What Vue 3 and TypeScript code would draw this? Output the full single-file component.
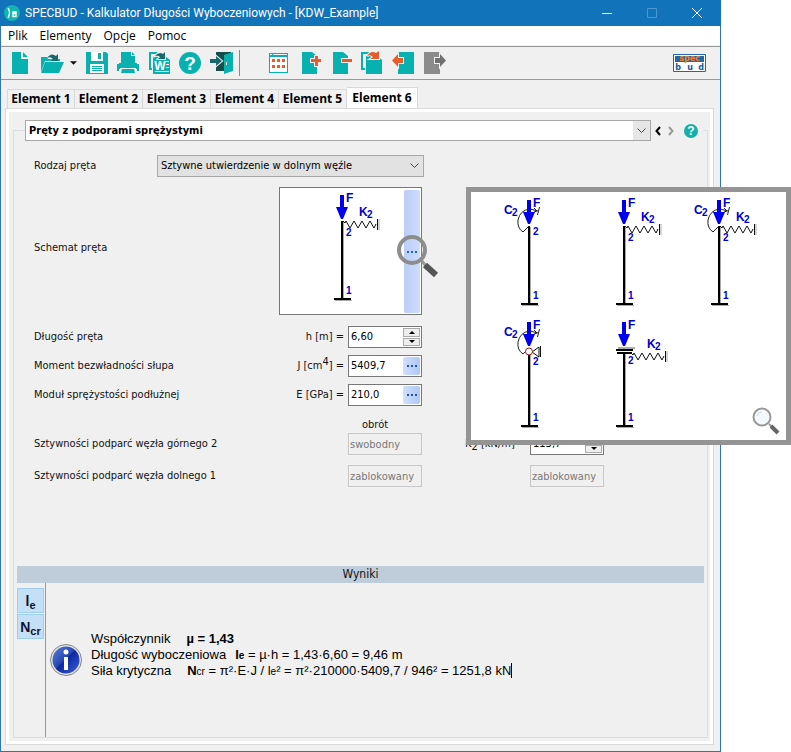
<script setup lang="ts">
import { ref } from 'vue'

interface Part { d: string; fill: string; stroke?: string }
interface Glyph { t: string; x: number; y: number; size: number; fill: string }
interface Tool { name: string; parts: Part[]; glyph?: Glyph }
interface Scheme { name: string; rotation: boolean; spring: boolean; top: 'free' | 'pinned' | 'guided'; nodeY: number }

const teal = '#06b1b0'
const dark = '#17696d'
const red = '#e85c2b'

const fileTools: Tool[] = [
  { name: 'Zapisz', parts: [
    { d: 'M1 1h20l2 2v20H1z', fill: teal },
    { d: 'M6 1h12v9H6zM5 13h14v9H5z', fill: '#fff' },
    { d: 'M13 2h3v6h-3zM7 15h10v1H7zM7 17h10v1H7zM7 19h10v1H7z', fill: teal },
  ] },
  { name: 'Drukuj', parts: [
    { d: 'M5 1h10v4h4v7H5zM16 1l3 3h-3z', fill: teal },
    { d: 'M1 13h2v-1h18v1h2v7h-2v-2H3v2H1z', fill: teal },
    { d: 'M4 17h16v1l1 5H3l1-5z', fill: '#f0f0f0' },
    { d: 'M6 18h12l1 4H5z', fill: teal },
  ] },
  { name: 'Eksport do Worda', parts: [
    { d: 'M2 1h8v3H5v15H2z', fill: teal },
    { d: 'M4 3h6v1H5v13H4z', fill: '#fff' },
    { d: 'M6 5h12l5 4v14H6z', fill: teal },
    { d: 'M18 10h4v1h-4zM19 13h3v1h-3zM19 16h3v1h-3zM8 20h14v1H8z', fill: '#fff' },
    { d: 'M8 5Q12 0 16 3l2-2v7h-7l2-2Q11 4 8 5z', fill: dark, stroke: '#f0f0f0' },
  ], glyph: { t: 'W', x: 13, y: 19, size: 12, fill: '#fff' } },
  { name: 'Pomoc', parts: [
    { d: 'M12 1a11 11 0 1 1 0 22a11 11 0 1 1 0-22z', fill: teal },
  ], glyph: { t: '?', x: 12, y: 19, size: 19, fill: '#fff' } },
  { name: 'Wyjście', parts: [
    { d: 'M7 1h15v19H7z', fill: '#174e4c' },
    { d: 'M15 4l9-3v19l-9 3z', fill: teal },
    { d: 'M17 11h1v3h-1z', fill: '#fff' },
    { d: 'M1 8h6V5l6 5-6 5v-3H1z', fill: dark, stroke: '#f0f0f0' },
  ] },
]

const elementTools: Tool[] = [
  { name: 'Lista elementów', parts: [
    { d: 'M2 2h19v20H2z', fill: teal },
    { d: 'M3 3h2v1H3zM6 3h14v1H6zM3 6h17v15H3z', fill: '#fff' },
    { d: 'M5 8h3v3H5zM10 8h3v3h-3zM15 8h3v3h-3zM5 14h3v3H5zM10 14h3v3h-3zM15 14h3v3h-3z', fill: red },
  ] },
  { name: 'Dodaj element', parts: [
    { d: 'M4 1h10l5 4v18H4z', fill: teal },
    { d: 'M17 5h3v3h3v3h-3v4h-3v-4h-4V8h4z', fill: red, stroke: '#f0f0f0' },
  ] },
  { name: 'Usuń element', parts: [
    { d: 'M4 1h10l5 4v18H4z', fill: teal },
    { d: 'M13 8h10v3H13z', fill: red, stroke: '#f0f0f0' },
  ] },
  { name: 'Kopiuj element', parts: [
    { d: 'M1 1h8v3H5v15H1z', fill: teal },
    { d: 'M3 3h5v1H5v13H3z', fill: '#fff' },
    { d: 'M6 5h12l4 4v14H6z', fill: teal },
    { d: 'M7 5Q11-1 16 2l3-2v8h-9l3-2Q10 3 7 5z', fill: red, stroke: '#f0f0f0' },
  ] },
  { name: 'Poprzedni element', parts: [
    { d: 'M7 1h16v22H7z', fill: teal },
    { d: 'M12 7v5H7v4L1 9.500 7 3v4z', fill: red, stroke: '#f0f0f0' },
  ] },
  { name: 'Następny element', parts: [
    { d: 'M2 1h16v22H2z', fill: '#8b8b8b' },
    { d: 'M13 7v5h5v4l6-6.500L18 3v4z', fill: '#707070', stroke: '#f0f0f0' },
  ] },
]

const menus = ['Plik', 'Elementy', 'Opcje', 'Pomoc']
const tabs = [1, 2, 3, 4, 5, 6]
const active = ref(6)

const schemes: Scheme[] = [
  { name: 'C2', rotation: true, spring: false, top: 'free', nodeY: 40 },
  { name: 'K2', rotation: false, spring: true, top: 'free', nodeY: 46 },
  { name: 'C2 K2', rotation: true, spring: true, top: 'free', nodeY: 46 },
  { name: 'C2 przegub', rotation: true, spring: false, top: 'pinned', nodeY: 48 },
  { name: 'K2 prowadnica', rotation: false, spring: true, top: 'guided', nodeY: 47 },
]
const current = [schemes[1]]

const length = ref('6,60')
const inertia = ref('5409,7')
const modulus = ref('210,0')
const stiffness = ref('113,7')
</script>

<template>
  <div class="screen">
    <main class="window">
      <header class="titlebar">
        <svg class="app-icon" viewBox="0 0 16 16" aria-hidden="true">
          <circle cx="8" cy="8" r="8" fill="#12b5b0" />
          <path d="M4 3Q7 8 4 13M9 8v-1h3v1M9 8.500h3v3H9z" fill="none" stroke="#fff" stroke-width="1.400" />
        </svg>
        <h1>SPECBUD - Kalkulator Długości Wyboczeniowych - [KDW_Example]</h1>
        <button class="caption" aria-label="Minimalizuj"><svg viewBox="0 0 12 12"><path d="M1 6.500h10" /></svg></button>
        <button class="caption dim" aria-label="Maksymalizuj" disabled><svg viewBox="0 0 12 12"><path d="M1.500 1.500h9v9h-9z" /></svg></button>
        <button class="caption" aria-label="Zamknij"><svg viewBox="0 0 12 12"><path d="M1 1l10 10M11 1L1 11" /></svg></button>
      </header>

      <nav class="menubar">
        <button v-for="m in menus" :key="m">{{ m }}</button>
      </nav>

      <div class="toolbar">
        <button class="tool" aria-label="Nowy">
          <svg viewBox="0 0 24 24"><path d="M4 1h9v7h7v15H4zM15 1v5h5z" fill="#06b1b0" /></svg>
        </button>
        <button class="tool" aria-label="Otwórz">
          <svg viewBox="0 0 24 24">
            <path d="M2 21V6h6l1 2h12v2H6z" fill="#06b1b0" />
            <path d="M6 11h19l-5 11H2z" fill="#06b1b0" />
            <path d="M8 7Q12 1 17 5l2-2v7h-7l2-2Q11 5 8 7z" fill="#17696d" />
          </svg>
        </button>
        <button class="drop" aria-label="Ostatnie pliki"><svg viewBox="0 0 8 4"><path d="M0 0h8L4 4z" fill="#111" /></svg></button>
        <button v-for="t in fileTools" :key="t.name" class="tool" :aria-label="t.name">
          <svg viewBox="0 0 24 24">
            <path v-for="(p, i) in t.parts" :key="i" :d="p.d" :fill="p.fill" :stroke="p.stroke" paint-order="stroke" stroke-width="2" />
            <text v-if="t.glyph" :x="t.glyph.x" :y="t.glyph.y" :font-size="t.glyph.size" :fill="t.glyph.fill" text-anchor="middle">{{ t.glyph.t }}</text>
          </svg>
        </button>
        <span class="divider"></span>
        <button v-for="t in elementTools" :key="t.name" class="tool" :aria-label="t.name">
          <svg viewBox="0 0 24 24">
            <path v-for="(p, i) in t.parts" :key="i" :d="p.d" :fill="p.fill" :stroke="p.stroke" paint-order="stroke" stroke-width="2" />
          </svg>
        </button>
        <svg class="brand" viewBox="0 0 33 18" role="img" aria-label="specbud">
          <path d="M.5.5h32v17H.5z" fill="#fff" stroke="#2268a8" />
          <path d="M2 2h29v6H2z" fill="#2268a8" />
          <text x="16.500" y="7" fill="#f08030" text-anchor="middle">spec</text>
          <text x="5" y="16" fill="#1459a0" text-anchor="middle">b</text>
          <text x="17" y="16" fill="#1459a0" text-anchor="middle">u</text>
          <text x="28" y="16" fill="#1459a0" text-anchor="middle">d</text>
        </svg>
      </div>

      <div class="tabs" role="tablist">
        <button v-for="n in tabs" :key="n" role="tab" :aria-selected="active === n" :class="{ on: active === n }" @click="active = n">Element {{ n }}</button>
      </div>

      <section class="sheet">
        <div class="group">
          <div class="heading">
            <div class="picker combo">
              <select aria-label="Typ elementu"><option>Pręty z podporami sprężystymi</option></select>
              <span class="arrow"><svg viewBox="0 0 9 6"><path d="M.5.5l4 4 4-4" /></svg></span>
            </div>
            <button class="step" aria-label="Wstecz"><svg viewBox="0 0 6 10"><path d="M5 1L1.500 5 5 9" stroke="#000" /></svg></button>
            <button class="step" aria-label="Dalej"><svg viewBox="0 0 6 10"><path d="M1 1l3.500 4L1 9" stroke="#999" /></svg></button>
            <button class="help" aria-label="Pomoc">
              <svg viewBox="0 0 14 14"><circle cx="7" cy="7" r="7" fill="#12b0a8" /><text x="7" y="11" font-size="12" fill="#fff" text-anchor="middle">?</text></svg>
            </button>
          </div>

          <form class="form" @submit.prevent>
            <div class="row kind">
              <label for="kind">Rodzaj pręta</label>
              <div class="picker">
                <select id="kind"><option>Sztywne utwierdzenie w dolnym węźle</option></select>
                <span class="arrow"><svg viewBox="0 0 9 6"><path d="M.5.5l4 4 4-4" /></svg></span>
              </div>
            </div>

            <div class="row drawing">
              <span>Schemat pręta</span>
              <div class="preview">
                <svg v-for="s in current" :key="s.name" class="scheme" viewBox="0 0 68 112" role="img" :aria-label="s.name">
                  <path d="M29.500 32v76M21 110.500h17" stroke="#aaa" />
                  <path d="M28 31v77" stroke="#000" stroke-width="2" />
                  <path d="M20 109h17" stroke="#000" stroke-width="2" />
                  <path d="M26 5h4v12h4l-5 12h-2l-5-12h4z" fill="#00e" />
                  <path d="M29 31l2 2 1-2 4 7 4-7 4 7 4-7 4 7 4-7 4 7 2-4M63.500 29v11" stroke="#111" fill="none" />
                  <path d="M65 29v11" stroke="#aaa" />
                  <text x="32" y="12" class="big">F</text>
                  <text x="45" y="26" class="big">K</text><text x="53" y="28" class="small">2</text>
                  <text x="32" :y="s.nodeY" class="small">2</text><text x="32" y="104" class="small">1</text>
                </svg>
                <button class="more" aria-label="Wybierz schemat"></button>
                <svg class="lens" viewBox="0 0 44 44" aria-hidden="true">
                  <path d="M25 26l5 6" stroke="#999" stroke-width="3" />
                  <path d="M29 31l11 10" stroke="#555" stroke-width="6" />
                  <circle cx="16" cy="16" r="13" fill="none" stroke="#8d8d8d" stroke-width="4" />
                  <path d="M11 17h2v2h-2zM15 17h2v2h-2zM19 17h2v2h-2z" fill="#2467a8" />
                </svg>
              </div>
            </div>

            <div class="row">
              <label for="len">Długość pręta</label>
              <span class="eq">h [m] =</span>
              <div class="field">
                <input id="len" v-model="length" />
                <span class="spin">
                  <button aria-label="Więcej"><svg viewBox="0 0 6 3"><path d="M0 3h6L3 0z" /></svg></button>
                  <button aria-label="Mniej"><svg viewBox="0 0 6 3"><path d="M0 0h6L3 3z" /></svg></button>
                </span>
              </div>
            </div>
            <div class="row">
              <label for="inertia">Moment bezwładności słupa</label>
              <span class="eq">J [cm<sup>4</sup>] =</span>
              <div class="field">
                <input id="inertia" v-model="inertia" />
                <button class="dots" aria-label="Oblicz moment"><i></i><i></i><i></i></button>
              </div>
            </div>
            <div class="row">
              <label for="modulus">Moduł sprężystości podłużnej</label>
              <span class="eq">E [GPa] =</span>
              <div class="field">
                <input id="modulus" v-model="modulus" />
                <button class="dots" aria-label="Wybierz moduł"><i></i><i></i><i></i></button>
              </div>
            </div>

            <div class="row caption-row"><span class="over">obrót</span></div>
            <div class="row support">
              <label for="rot2">Sztywności podparć węzła górnego 2</label>
              <input id="rot2" class="locked" value="swobodny" disabled />
              <label for="k2" class="unit">K<sub>2</sub> [kN/m]</label>
              <div class="field">
                <input id="k2" v-model="stiffness" />
                <span class="spin">
                  <button aria-label="Więcej"><svg viewBox="0 0 6 3"><path d="M0 3h6L3 0z" /></svg></button>
                  <button aria-label="Mniej"><svg viewBox="0 0 6 3"><path d="M0 0h6L3 3z" /></svg></button>
                </span>
              </div>
            </div>
            <div class="row support">
              <label for="rot1">Sztywności podparć węzła dolnego 1</label>
              <input id="rot1" class="locked" value="zablokowany" disabled />
              <input class="locked last" value="zablokowany" aria-label="Przesuw węzła dolnego" disabled />
            </div>
          </form>

          <h2>Wyniki</h2>
          <div class="results">
            <div class="switches">
              <button>l<sub>e</sub></button>
              <button>N<sub>cr</sub></button>
            </div>
            <div class="report">
              <svg class="info" viewBox="0 0 32 32" aria-hidden="true">
                <defs>
                  <linearGradient id="ball" x1="0" y1="0" x2="1" y2="1">
                    <stop offset="0" stop-color="#5b82d8" /><stop offset=".45" stop-color="#2648b4" />
                    <stop offset=".5" stop-color="#0c28a0" /><stop offset="1" stop-color="#3e62dc" />
                  </linearGradient>
                </defs>
                <circle cx="16" cy="16" r="15.500" fill="#e4e4e4" stroke="#858585" />
                <circle cx="16" cy="16" r="13.500" fill="url(#ball)" />
                <circle cx="16" cy="8" r="2.500" fill="#fff" />
                <path d="M14 13h4v13h-4z" fill="#fff" />
              </svg>
              <div class="lines">
                <p><span>Współczynnik</span><span class="wide"><b>µ = 1,43</b></span></p>
                <p><span>Długość wyboczeniowa</span><span class="near"><b>l<small>e</small></b> = µ·h = 1,43·6,60 = 9,46 m</span></p>
                <p><span>Siła krytyczna</span><span class="wide"><b>N</b><small>cr</small> = π²·E·J / l<small>e</small>² = π²·210000·5409,7 / 946² = 1251,8 kN</span><i class="caret"></i></p>
              </div>
            </div>
          </div>
        </div>
      </section>
    </main>

    <aside class="popup" aria-label="Schematy">
      <svg v-for="s in schemes" :key="s.name" class="scheme" viewBox="0 0 68 112" role="img" :aria-label="s.name">
        <path :d="s.top === 'free' ? 'M29.500 32v76M21 110.500h17' : 'M29.500 37v71M21 110.500h17'" stroke="#aaa" />
        <path :d="s.top === 'free' ? 'M28 31v77' : 'M28 36v72'" stroke="#000" stroke-width="2" />
        <path d="M20 109h17" stroke="#000" stroke-width="2" />
        <path v-if="s.rotation" d="M28 31l-6 6q-6-4-5-12q2-10 12-11l8 2M38.500 12l-2 8M33 13l3 3-3 1" stroke="#222" fill="none" />
        <path d="M26 5h4v12h4l-5 12h-2l-5-12h4z" fill="#00e" />
        <g v-if="s.top === 'pinned'" fill="none" stroke="#111">
          <path d="M31 35l7-5v10zM39.500 29v11" />
          <circle cx="28" cy="34.500" r="3.500" fill="#fff" stroke="#a02020" />
        </g>
        <g v-if="s.top === 'guided'" stroke="#000" stroke-width="2">
          <path d="M22 31h17" stroke="#aaa" />
          <path d="M20 33h17M21 36h15" />
        </g>
        <g v-if="s.spring" :transform="s.top === 'guided' ? 'translate(6 5)' : undefined">
          <path d="M29 31l2 2 1-2 4 7 4-7 4 7 4-7 4 7 4-7 4 7 2-4M63.500 29v11" stroke="#111" fill="none" />
          <path d="M65 29v11" stroke="#aaa" />
          <text x="45" y="26" class="big">K</text><text x="53" y="28" class="small">2</text>
        </g>
        <text x="32" y="12" class="big">F</text>
        <g v-if="s.rotation"><text x="3" y="19" class="big">C</text><text x="11" y="21" class="small">2</text></g>
        <text x="32" :y="s.nodeY" class="small">2</text><text x="32" y="104" class="small">1</text>
      </svg>
      <svg class="corner" viewBox="0 0 28 28" aria-hidden="true">
        <path d="M17 17l4 4" stroke="#999" stroke-width="2" />
        <path d="M19 19l7 7" stroke="#666" stroke-width="4" />
        <circle cx="10" cy="10" r="8.500" fill="#f5f9fd" stroke="#999" stroke-width="2" />
        <path d="M5 9q1-4 5-4" stroke="#c5dcf2" fill="none" />
      </svg>
    </aside>
  </div>
</template>

<style>
body { background: #fff; }
</style>

<style scoped>
* { box-sizing: border-box; }
.screen { position: relative; min-height: 100vh; padding-right: 70px; display: flex; font: 11px/16px "DejaVu Sans Condensed", "DejaVu Sans", sans-serif; color: #111; }
button { border: 0; background: none; padding: 0; margin: 0; font: inherit; color: inherit; }
svg { display: block; overflow: visible; flex: none; }
svg text { font-family: "Liberation Sans", Arial, sans-serif; font-weight: bold; }
.window { flex: 1; display: flex; flex-direction: column; background: #f0f0f0; border: 1px solid #2d76b2; border-top: 0; }
.titlebar { height: 26px; margin: 0 -1px; padding: 0 2px 0 4px; display: flex; align-items: center; background: #1173b9; color: #fff; }
.app-icon { width: 16px; height: 16px; }
h1 { flex: 1; margin: 0 0 0 5px; font: 12px/16px Roboto, "Open Sans", sans-serif; white-space: nowrap; }
.caption { width: 45px; height: 26px; display: grid; place-items: center; }
.caption svg { width: 12px; height: 12px; fill: none; stroke: #fff; }
.dim svg { stroke: #4b98d4; }
.menubar { height: 19px; padding: 0 7px; display: flex; gap: 12px; background: #fff; color: #000; font: 12px/19px "Open Sans", "Noto Sans", sans-serif; }
.toolbar { height: 34px; margin-top: 1px; padding: 0 14px 0 3px; display: flex; align-items: center; border-top: 1px solid #999; border-bottom: 1px solid #999; }
.tool { width: 31px; height: 30px; display: grid; place-items: center; }
.tool svg { width: 24px; height: 24px; }
.drop { width: 15px; height: 30px; padding-left: 4px; }
.drop svg { width: 7px; height: 4px; }
.divider { width: 1px; height: 26px; margin: 0 23px 0 3px; background: #888; }
.brand { width: 33px; height: 18px; margin-left: auto; }
.brand text { font-family: "DejaVu Sans", sans-serif; font-size: 8px; }
.tabs { height: 28px; padding: 7px 0 0 6px; display: flex; align-items: flex-end; }
.tabs button { width: 68px; height: 19px; border: 1px solid #d9d9d9; border-left-width: 0; border-bottom: 0; font: bold 12px/18px "Open Sans", "Noto Sans", sans-serif; color: #000; white-space: nowrap; }
.tabs button:first-child { border-left-width: 1px; }
.tabs .on { width: 71px; height: 21px; background: #fff; }
.sheet { flex: 1; display: flex; margin: 0 6px 6px 4px; padding: 3px; border: 1px solid #d9d9d9; background: linear-gradient(#f0f0f0, #f0f0f0) content-box, #fff; }
.group { flex: 1; display: flex; flex-direction: column; margin: 18px 2px 3px 4px; padding: 0 3px; border: 1px solid #dcdcdc; }
.heading { display: flex; align-items: center; height: 21px; margin: -11px 1px 0 8px; background: #f0f0f0; }
.picker { position: relative; display: flex; height: 22px; }
.picker select { appearance: none; flex: 1; width: 100%; height: 100%; padding: 0 20px 0 3px; border: 1px solid #a8a8a8; border-radius: 0; background: #e2e2e2; color: #000; font: inherit; }
.arrow { position: absolute; right: 1px; top: 1px; bottom: 1px; width: 17px; display: grid; place-items: center; pointer-events: none; }
.arrow svg { width: 9px; height: 6px; fill: none; stroke: #444; }
.combo { flex: 1; height: 21px; }
.combo select { background: #fff; font: bold 11px "DejaVu Sans Condensed", "DejaVu Sans", sans-serif; }
.combo .arrow { background: #e6e6e6; }
.step { width: 13px; height: 20px; display: grid; place-items: center; }
.step svg { width: 6px; height: 10px; fill: none; stroke-width: 2; }
.help { margin: 0 5px 0 7px; }
.help svg { width: 14px; height: 14px; }
.form { padding: 14px 0 0 17px; }
.row { display: grid; grid-template-columns: 245px 65px 78px; align-items: center; height: 22px; margin-bottom: 7px; white-space: nowrap; }
.kind { grid-template-columns: 123px 267px; margin-bottom: 10px; }
.drawing { grid-template-columns: 245px 143px; height: 128px; margin-bottom: 11px; }
.drawing > span { padding-bottom: 6px; }
.preview { position: relative; display: flex; height: 128px; padding: 2px 1px 1px 34px; border: 1px solid #777; background: #fff; }
.scheme { width: 68px; height: 112px; }
.big { font-size: 12px; fill: #00c; }
.small { font-size: 10px; fill: #00c; }
.more { width: 16px; margin-left: auto; background: linear-gradient(90deg, #bccdf8, #cddcfd); border-radius: 2px; }
.lens { position: absolute; right: -19px; top: 46px; width: 44px; height: 44px; }
.eq { text-align: right; }
sup { font-size: 11px; line-height: 0; vertical-align: 4px; }
sub { font-size: 11px; line-height: 0; vertical-align: -3px; }
.field { display: flex; width: 74px; height: 22px; margin-left: 4px; padding: 1px; border: 1px solid #777; background: #fff; }
.field input { flex: 1; width: 20px; min-width: 0; border: 0; padding: 0 1px; background: none; font: inherit; color: #000; }
.spin { width: 17px; display: flex; flex-direction: column; gap: 1px; }
.spin button { flex: 1; display: grid; place-items: center; border: 1px solid #aaa; background: #eee; }
.spin svg { width: 6px; height: 3px; }
.dots { width: 17px; display: flex; align-items: center; justify-content: center; gap: 2px; background: linear-gradient(90deg, #cfdffc, #b0c6f6); border-radius: 2px; }
.dots i { width: 2px; height: 2px; background: #2454a8; }
.caption-row { height: 16px; margin: 11px 0 0; grid-template-columns: 314px 74px; }
.over { grid-column: 2; padding-left: 14px; }
.support { grid-template-columns: 314px 74px 43px 61px 78px; height: 22px; margin-bottom: 10px; }
.locked { width: 74px; height: 22px; padding: 0 1px; border: 1px solid #c8c8c8; background: #f0f0f0; font: inherit; color: #777; }
.unit { grid-column: 4; margin-left: 0; }
.last { grid-column: 5; margin-left: 4px; }
h2 { margin: auto 0 0; height: 17px; background: #bfcddb; text-align: center; font: 12px/17px "DejaVu Sans Condensed", "DejaVu Sans", sans-serif; }
.results { display: flex; height: 154px; }
.switches { width: 29px; padding-top: 5px; border-right: 1px solid #999; display: flex; flex-direction: column; gap: 1px; }
.switches button { width: 27px; height: 25px; border: 1px solid #9fcdf0; background: #c3e0f7; font: bold 14px/20px "Liberation Sans", Arial, sans-serif; color: #101030; }
.report { display: flex; align-items: center; gap: 9px; padding-left: 4px; }
.info { width: 32px; height: 32px; }
.lines { padding-bottom: 11px; font: 13px/16px "Liberation Sans", Arial, sans-serif; color: #000; }
.lines p { display: flex; margin: 0; white-space: pre; }
.lines small { font-size: 10px; line-height: 0; }
.wide { margin-left: 16px; }
.near { margin-left: 9px; }
.caret { width: 1px; height: 15px; background: #000; }
.popup { position: absolute; right: 0; top: 187px; width: 325px; height: 258px; padding: 3px 27px 3px 30px; display: grid; grid-template-columns: repeat(3, 68px); grid-auto-rows: 112px; gap: 10px 27px; border: 5px solid #949494; background: #fff; }
.corner { position: absolute; right: 6px; bottom: 5px; width: 28px; height: 28px; }
</style>
